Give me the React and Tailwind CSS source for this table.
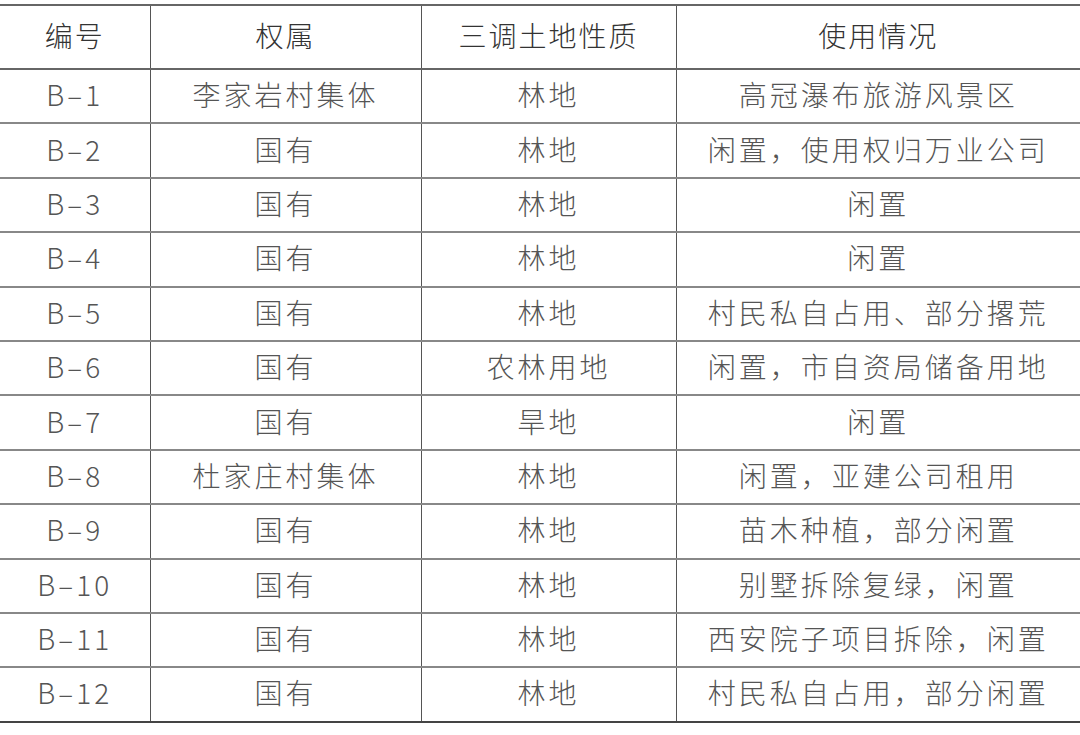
import React from 'react';

const rows = [
  ['B–1', '李家岩村集体', '林地', '高冠瀑布旅游风景区'],
  ['B–2', '国有', '林地', '闲置，使用权归万业公司'],
  ['B–3', '国有', '林地', '闲置'],
  ['B–4', '国有', '林地', '闲置'],
  ['B–5', '国有', '林地', '村民私自占用、部分撂荒'],
  ['B–6', '国有', '农林用地', '闲置，市自资局储备用地'],
  ['B–7', '国有', '旱地', '闲置'],
  ['B–8', '杜家庄村集体', '林地', '闲置，亚建公司租用'],
  ['B–9', '国有', '林地', '苗木种植，部分闲置'],
  ['B–10', '国有', '林地', '别墅拆除复绿，闲置'],
  ['B–11', '国有', '林地', '西安院子项目拆除，闲置'],
  ['B–12', '国有', '林地', '村民私自占用，部分闲置'],
];

const headers = ['编号', '权属', '三调土地性质', '使用情况'];

export default function App() {
  return (
    <div className="w-[1080px] h-[735px] bg-white pt-1 overflow-hidden" style={{ fontFamily: '"Noto Sans CJK SC", "Noto Sans", sans-serif' }}>
      <table className="w-full border-collapse table-fixed">
        <colgroup>
          <col className="w-[150px]" />
          <col className="w-[271px]" />
          <col className="w-[255px]" />
          <col />
        </colgroup>
        <thead>
          <tr className="h-[64px] border-t-2 border-b-2 border-[#666]">
            {headers.map((h, i) => (
              <th key={h} className={`text-[28px] font-light text-[#333] tracking-[2px] text-center leading-none pb-1 ${i > 0 ? 'border-l border-[#555]' : ''}`}>{h}</th>
            ))}
          </tr>
        </thead>
        <tbody>
          {rows.map((r, ri) => (
            <tr key={r[0]} className={`h-[54.4px] ${ri === rows.length - 1 ? 'border-b-2 border-[#444]' : 'border-b-2 border-[#888]'}`}>
              {r.map((c, i) => (
                <td key={i} className={`text-[28px] font-light text-[#555] tracking-[3px] text-center leading-none pb-1 ${i > 0 ? 'border-l border-[#555]' : ''}`}>{c}</td>
              ))}
            </tr>
          ))}
        </tbody>
      </table>
    </div>
  );
}
